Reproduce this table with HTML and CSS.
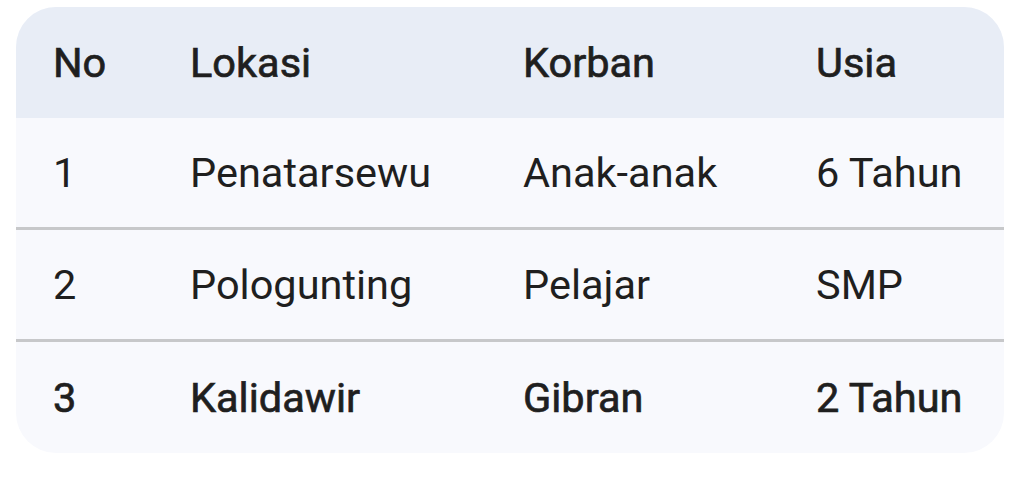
FILE: index.html
```html
<!DOCTYPE html>
<html lang="id">
<head>
<meta charset="utf-8">
<link rel="stylesheet" href="styles.css">
</head>
<body>
<div class="card">
  <table class="data">
    <colgroup>
      <col class="c1"><col class="c2"><col class="c3"><col class="c4">
    </colgroup>
    <thead>
      <tr class="head"><th>No</th><th>Lokasi</th><th>Korban</th><th>Usia</th></tr>
    </thead>
    <tbody>
      <tr class="row sep"><td>1</td><td>Penatarsewu</td><td>Anak-anak</td><td>6 Tahun</td></tr>
      <tr class="row sep"><td>2</td><td>Pologunting</td><td>Pelajar</td><td>SMP</td></tr>
      <tr class="row strong"><td>3</td><td>Kalidawir</td><td>Gibran</td><td>2 Tahun</td></tr>
    </tbody>
  </table>
</div>
</body>
</html>
```
FILE: styles.css
```css
html, body {
  margin: 0;
  padding: 0;
  background: #ffffff;
}
body {
  font-family: Roboto, "Noto Sans", sans-serif;
  color: #1f1f1f;
}
.card {
  margin: 7px 20px 0 16px;
  width: 988px;
  border-radius: 40px;
  overflow: hidden;
  background: #f8f9fd;
}
.data {
  width: 100%;
  border-collapse: separate;
  border-spacing: 0;
  table-layout: fixed;
  font-size: 41.5px;
}
.c1 { width: 137px; }
.c2 { width: 333px; }
.c3 { width: 293px; }
.c4 { width: 225px; }
.data th, .data td {
  padding: 0 0 0 37px;
  text-align: left;
  white-space: nowrap;
  vertical-align: middle;
}
.head {
  background: #e8edf6;
}
.head th {
  height: 111px;
  font-weight: 400;
  -webkit-text-stroke: 0.7px #1f1f1f;
}
.row td {
  font-weight: 400;
}
.sep td {
  height: 109px;
  border-bottom: 3px solid #c7c8ca;
}
.strong td {
  height: 111px;
  -webkit-text-stroke: 0.7px #1f1f1f;
}
```
